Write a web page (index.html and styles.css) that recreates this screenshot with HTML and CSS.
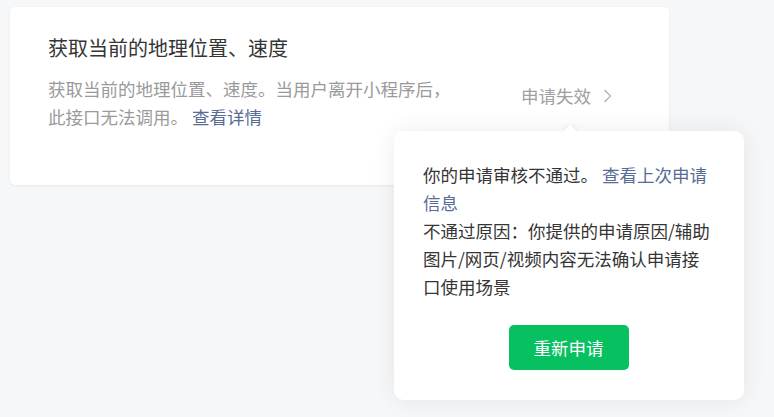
FILE: index.html
```html
<!DOCTYPE html>
<html lang="zh-CN">
<head>
<meta charset="utf-8">
<title>接口权限</title>
<link rel="stylesheet" href="styles.css">
</head>
<body>
<div class="page">
  <div class="card">
    <div class="card-main">
      <div class="card-title">获取当前的地理位置、速度</div>
      <div class="card-desc">获取当前的地理位置、速度。当用户离开小程序后，此接口无法调用。 <a class="link" href="#">查看详情</a></div>
    </div>
    <div class="status">
      <span class="status-text">申请失效</span>
      <svg class="chevron" width="9" height="14" viewBox="0 0 9 14"><path d="M1.5 1 L7.5 7 L1.5 13" fill="none" stroke="#b2b2b2" stroke-width="1.3"/></svg>
    </div>
  </div>
  <div class="popover">
    <div class="popover-arrow"></div>
    <div class="popover-body">
      <p class="popover-text">你的申请审核不通过。 <a class="link" href="#">查看上次申请信息</a></p>
      <p class="popover-text">不通过原因：你提供的申请原因/辅助图片/网页/视频内容无法确认申请接口使用场景</p>
      <div class="popover-actions"><button class="btn-primary" type="button">重新申请</button></div>
    </div>
  </div>
</div>
</body>
</html>
```

FILE: styles.css
```css
html, body {
  margin: 0;
  padding: 0;
  background: #f6f7f9;
  font-family: "Noto Sans CJK SC", "Noto Sans", sans-serif;
  color: #353535;
}

.page {
  position: relative;
  width: 774px;
  height: 417px;
  padding-top: 7px;
  padding-left: 10px;
  box-sizing: border-box;
}

.card {
  width: 659px;
  height: 178px;
  box-sizing: border-box;
  background: #fff;
  border-radius: 5px;
  box-shadow: 0 1px 3px rgba(0, 0, 0, 0.06);
  display: flex;
  align-items: center;
  padding: 0 57px 0 38px;
}

.card-main {
  align-self: flex-start;
  padding-top: 27px;
}

.card-title {
  font-size: 20px;
  line-height: 28px;
  color: #353535;
}

.card-desc {
  margin-top: 13px;
  width: 412px;
  font-size: 17.5px;
  line-height: 28px;
  color: #9a9a9a;
}

.link {
  color: #576b95;
  text-decoration: none;
}

.status {
  margin-left: auto;
  display: flex;
  align-items: center;
  gap: 12px;
  color: #a0a0a0;
  font-size: 17.5px;
  line-height: 28px;
}

.chevron {
  display: block;
}

.popover {
  position: absolute;
  left: 394px;
  top: 131px;
  width: 350px;
  background: #fff;
  border-radius: 10px;
  box-shadow: 0 0 24px rgba(0, 0, 0, 0.08);
}

.popover-arrow {
  position: absolute;
  top: -8px;
  left: 168px;
  width: 16px;
  height: 16px;
  overflow: hidden;
}

.popover-arrow::before {
  content: "";
  position: absolute;
  left: 2px;
  top: 4px;
  width: 12px;
  height: 12px;
  background: #fff;
  transform: rotate(45deg);
  box-shadow: 0 0 6px rgba(0, 0, 0, 0.08);
}

.popover-body {
  position: relative;
  background: #fff;
  border-radius: 10px;
  padding: 30px 30px 30px 29px;
}

.popover-text {
  margin: 0;
  font-size: 17.5px;
  line-height: 28px;
  color: #353535;
}

.popover-actions {
  display: flex;
  justify-content: center;
  margin-top: 24px;
}

.btn-primary {
  width: 120px;
  height: 45px;
  border: 0;
  border-radius: 5px;
  background: #07c160;
  color: #fff;
  font-family: inherit;
  font-size: 17.5px;
  cursor: pointer;
}
```
